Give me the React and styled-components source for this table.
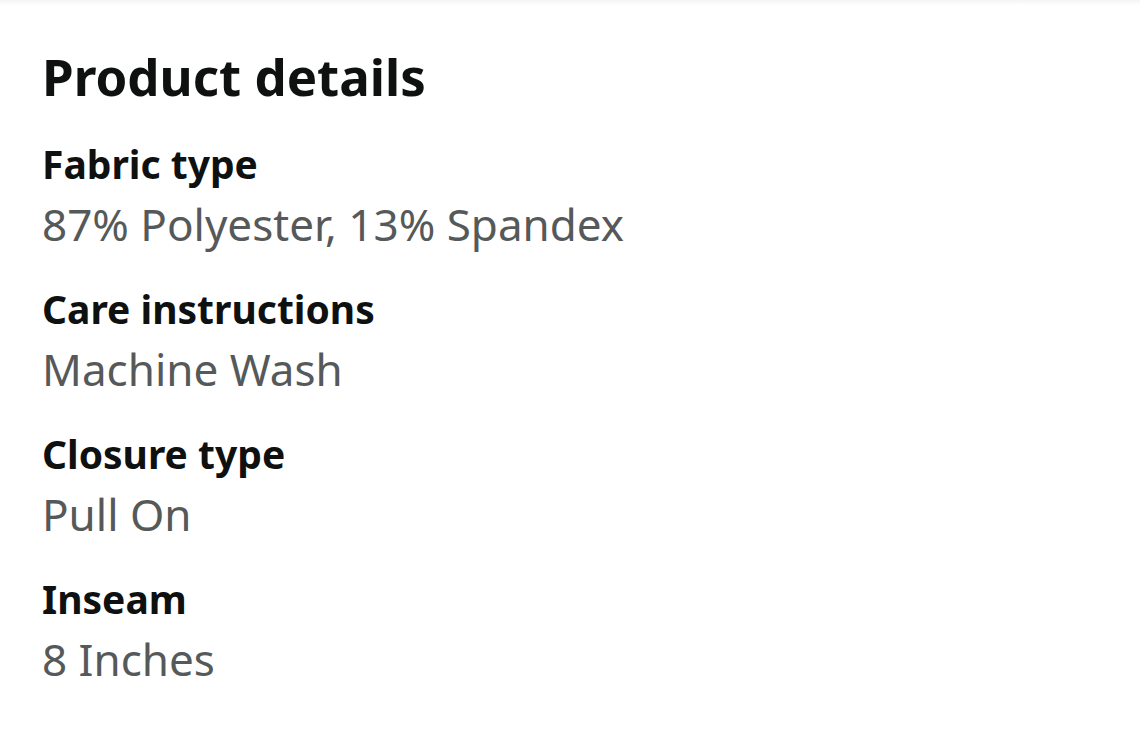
import React from "react";
import styled, { createGlobalStyle } from "styled-components";

const Global = createGlobalStyle`
  html, body { margin: 0; padding: 0; background: #ffffff; }
  body { font-family: "Noto Sans", "Open Sans", sans-serif; }
`;

const Page = styled.div`
  width: 1140px;
  height: 749px;
  overflow: hidden;
  background: linear-gradient(#f4f4f4 0px, #fbfbfb 3px, #ffffff 6px);
`;

const Section = styled.section`
  padding: 40px 42px 0 42px;
  display: flex;
  flex-direction: column;
`;

const Heading = styled.h2`
  margin: 0 0 22px 0;
  font-size: 51px;
  line-height: 72px;
  font-weight: 700;
  color: #0f1111;
`;

const List = styled.dl`
  margin: 0;
  display: flex;
  flex-direction: column;
  gap: 25px;
`;

const Item = styled.div`
  display: flex;
  flex-direction: column;
`;

const Label = styled.dt`
  font-size: 39px;
  line-height: 60px;
  font-weight: 700;
  color: #0f1111;
`;

const Value = styled.dd`
  margin: 0;
  font-size: 44px;
  line-height: 60px;
  font-weight: 400;
  color: #565959;
`;

const details = [
  ["Fabric type", "87% Polyester, 13% Spandex"],
  ["Care instructions", "Machine Wash"],
  ["Closure type", "Pull On"],
  ["Inseam", "8 Inches"],
];

export default function App() {
  return (
    <Page>
      <Global />
      <Section>
        <Heading>Product details</Heading>
        <List>
          {details.map(([k, v]) => (
            <Item key={k}>
              <Label>{k}</Label>
              <Value>{v}</Value>
            </Item>
          ))}
        </List>
      </Section>
    </Page>
  );
}
